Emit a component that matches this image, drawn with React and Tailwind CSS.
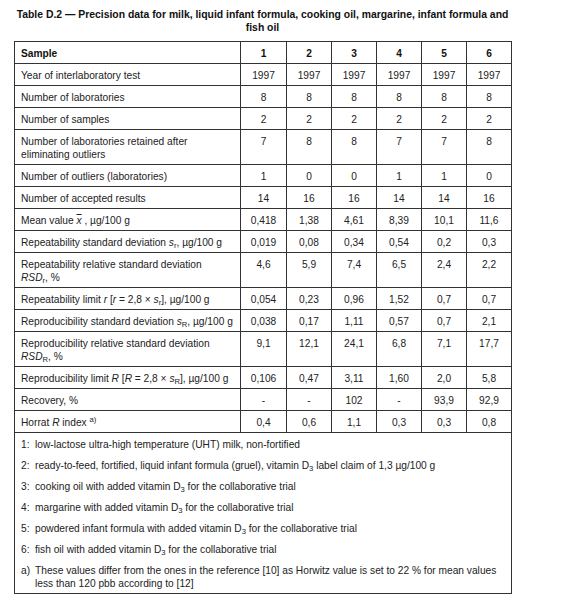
import React from "react";

const S = ({ children }) => <span className="italic">{children}</span>;

const rows = [
  { label: "Year of interlaboratory test", v: ["1997", "1997", "1997", "1997", "1997", "1997"] },
  { label: "Number of laboratories", v: ["8", "8", "8", "8", "8", "8"] },
  { label: "Number of samples", v: ["2", "2", "2", "2", "2", "2"] },
  {
    label: (
      <>
        Number of laboratories retained after
        <br />
        eliminating outliers
      </>
    ),
    v: ["7", "8", "8", "7", "7", "8"],
  },
  { label: "Number of outliers (laboratories)", v: ["1", "0", "0", "1", "1", "0"] },
  { label: "Number of accepted results", v: ["14", "16", "16", "14", "14", "16"] },
  {
    label: (
      <>
        Mean value <span className="italic overline">x</span> , µg/100 g
      </>
    ),
    v: ["0,418", "1,38", "4,61", "8,39", "10,1", "11,6"],
  },
  {
    label: (
      <>
        Repeatability standard deviation <S>s</S>
        <sub>r</sub>, µg/100 g
      </>
    ),
    v: ["0,019", "0,08", "0,34", "0,54", "0,2", "0,3"],
  },
  {
    label: (
      <>
        Repeatability relative standard deviation
        <br />
        <S>RSD</S>
        <sub>r</sub>, %
      </>
    ),
    v: ["4,6", "5,9", "7,4", "6,5", "2,4", "2,2"],
  },
  {
    label: (
      <>
        Repeatability limit <S>r</S> [<S>r</S> = 2,8 × <S>s</S>
        <sub>r</sub>], µg/100 g
      </>
    ),
    v: ["0,054", "0,23", "0,96", "1,52", "0,7", "0,7"],
  },
  {
    label: (
      <>
        Reproducibility standard deviation <S>s</S>
        <sub>R</sub>, µg/100 g
      </>
    ),
    v: ["0,038", "0,17", "1,11", "0,57", "0,7", "2,1"],
  },
  {
    label: (
      <>
        Reproducibility relative standard deviation
        <br />
        <S>RSD</S>
        <sub>R</sub>, %
      </>
    ),
    v: ["9,1", "12,1", "24,1", "6,8", "7,1", "17,7"],
  },
  {
    label: (
      <>
        Reproducibility limit <S>R</S> [<S>R</S> = 2,8 × <S>s</S>
        <sub>R</sub>], µg/100 g
      </>
    ),
    v: ["0,106", "0,47", "3,11", "1,60", "2,0", "5,8"],
  },
  { label: "Recovery, %", v: ["-", "-", "102", "-", "93,9", "92,9"] },
  {
    label: (
      <>
        Horrat <S>R</S> index <sup>a)</sup>
      </>
    ),
    v: ["0,4", "0,6", "1,1", "0,3", "0,3", "0,8"],
  },
];

const notes = [
  ["1:", <>low-lactose ultra-high temperature (UHT) milk, non-fortified</>],
  [
    "2:",
    <>
      ready-to-feed, fortified, liquid infant formula (gruel), vitamin D<sub>3</sub> label claim of 1,3 µg/100 g
    </>,
  ],
  ["3:", <>cooking oil with added vitamin D<sub>3</sub> for the collaborative trial</>],
  ["4:", <>margarine with added vitamin D<sub>3</sub> for the collaborative trial</>],
  ["5:", <>powdered infant formula with added vitamin D<sub>3</sub> for the collaborative trial</>],
  ["6:", <>fish oil with added vitamin D<sub>3</sub> for the collaborative trial</>],
  [
    "a)",
    <>
      These values differ from the ones in the reference [10] as Horwitz value is set to 22 % for mean values less than 120 pbb according to [12]
    </>,
  ],
];

export default function App() {
  return (
    <div className="w-[576px] h-[600px] bg-white text-[#222] pl-[14px] pt-[8px] overflow-hidden font-['Liberation_Sans',Arial,sans-serif]">
      <div className="w-[497px]">
        <h1 className="text-center font-bold text-[10.4px] leading-[13px] text-[#111]">
          Table D.2 — Precision data for milk, liquid infant formula, cooking oil, margarine, infant formula and fish oil
        </h1>
        <table className="mt-[7px] w-[497px] table-fixed border-collapse text-[10.2px] leading-[13px]">
          <colgroup>
            <col className="w-[226px]" />
            <col className="w-[46px]" />
            <col className="w-[45px]" />
            <col className="w-[45px]" />
            <col className="w-[45px]" />
            <col className="w-[45px]" />
            <col className="w-[45px]" />
          </colgroup>
          <thead>
            <tr>
              <th className="border border-[#333] pl-[6px] pt-[5px] pb-[3px] text-left font-bold align-top text-[#111]">
                Sample
              </th>
              {["1", "2", "3", "4", "5", "6"].map((n) => (
                <th key={n} className="border border-[#333] pt-[5px] pb-[3px] text-center font-bold align-top text-[#111]">
                  {n}
                </th>
              ))}
            </tr>
          </thead>
          <tbody>
            {rows.map((r, i) => (
              <tr key={i}>
                <td className="border border-[#333] pl-[6px] pt-[5px] pb-[3px] align-top">{r.label}</td>
                {r.v.map((x, j) => (
                  <td key={j} className="border border-[#333] pt-[5px] pb-[3px] text-center align-top">
                    {x}
                  </td>
                ))}
              </tr>
            ))}
            <tr>
              <td colSpan={7} className="border border-[#333] pl-[6px] pr-[4px] pt-[5px] pb-[3px]">
                <div className="flex flex-col gap-[8px]">
                  {notes.map(([k, t], i) => (
                    <div key={i} className="flex">
                      <span className="w-[14px] shrink-0">{k}</span>
                      <span>{t}</span>
                    </div>
                  ))}
                </div>
              </td>
            </tr>
          </tbody>
        </table>
      </div>
    </div>
  );
}
